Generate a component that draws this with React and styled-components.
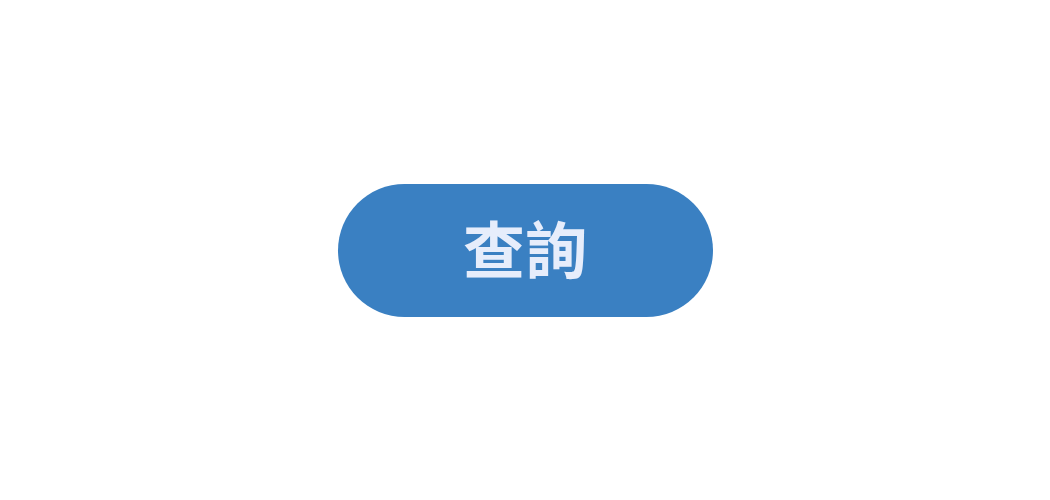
import React from 'react';
import styled, { createGlobalStyle } from 'styled-components';

const GlobalStyle = createGlobalStyle`
  html, body {
    margin: 0;
    padding: 0;
    background: #ffffff;
  }
  #root {
    height: 100vh;
  }
`;

const Page = styled.div`
  height: 100%;
  display: flex;
  align-items: center;
  justify-content: center;
`;

const SearchButton = styled.button`
  width: 375px;
  height: 133px;
  padding: 0 0 6px;
  border: none;
  border-radius: 67px;
  background-color: #3a80c2;
  color: #e6edfb;
  font-family: "Noto Sans CJK TC", "Noto Sans", sans-serif;
  font-weight: 700;
  font-size: 62px;
  line-height: 1;
  display: flex;
  align-items: center;
  justify-content: center;
  cursor: pointer;
`;

const App = () => (
  <>
    <GlobalStyle />
    <Page>
      <SearchButton type="button">查詢</SearchButton>
    </Page>
  </>
);

export default App;
